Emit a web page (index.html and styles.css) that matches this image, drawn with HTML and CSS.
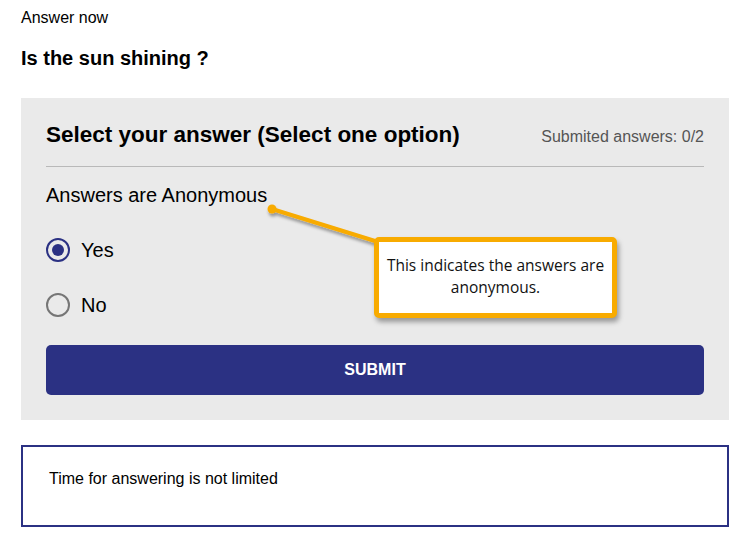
FILE: index.html
```html
<!DOCTYPE html>
<html lang="en">
<head>
<meta charset="utf-8">
<title>Answer now</title>
<link rel="stylesheet" href="styles.css">
</head>
<body>
<div class="page">
  <div class="eyebrow">Answer now</div>
  <h1 class="question">Is the sun shining ?</h1>

  <section class="panel">
    <div class="panel-head">
      <h2 class="panel-title">Select your answer (Select one option)</h2>
      <span class="counter">Submited answers: 0/2</span>
    </div>
    <div class="anon">Answers are Anonymous</div>
    <div class="options">
      <label class="option"><span class="radio checked"></span><span>Yes</span></label>
      <label class="option"><span class="radio"></span><span>No</span></label>
    </div>
    <button class="submit" type="button">SUBMIT</button>

    <svg class="connector" width="120" height="50" viewBox="0 0 120 50">
      <defs>
        <filter id="sh" x="-20%" y="-50%" width="140%" height="200%">
          <feDropShadow dx="1" dy="3" stdDeviation="1.5" flood-color="#000" flood-opacity="0.35"/>
        </filter>
      </defs>
      <g filter="url(#sh)">
        <line x1="7" y1="8" x2="110" y2="40" stroke="#f8ab00" stroke-width="4"/>
        <circle cx="7" cy="8" r="4.5" fill="#f8ab00"/>
      </g>
    </svg>
    <div class="callout">This indicates the answers are anonymous.</div>
  </section>

  <div class="info">Time for answering is not limited</div>
</div>
</body>
</html>
```

FILE: styles.css
```css
html, body {
  margin: 0;
  padding: 0;
  background: #ffffff;
}

.page {
  padding: 9px 15px 0 21px;
  font-family: "Liberation Sans", Arial, sans-serif;
  color: #000;
}

.eyebrow {
  font-size: 16px;
  line-height: 18px;
}

.question {
  margin: 20px 0 0;
  font-size: 20px;
  line-height: 23px;
  font-weight: bold;
}

.panel {
  position: relative;
  margin-top: 28px;
  background: #eaeaea;
  padding: 23px 25px 25px 25px;
}

.panel-head {
  display: flex;
  justify-content: space-between;
  align-items: baseline;
  padding-bottom: 17px;
  border-bottom: 1px solid #b9b9b9;
}

.panel-title {
  margin: 0;
  font-size: 22.5px;
  line-height: 28px;
  font-weight: bold;
}

.counter {
  font-size: 16px;
  color: #555555;
}

.anon {
  margin-top: 17px;
  font-size: 20px;
  line-height: 23px;
}

.options {
  display: flex;
  flex-direction: column;
  gap: 31px;
  margin-top: 31px;
}

.option {
  display: flex;
  align-items: center;
  gap: 11px;
  font-size: 20px;
  line-height: 24px;
  height: 24px;
}

.radio {
  box-sizing: border-box;
  width: 24px;
  height: 24px;
  border-radius: 50%;
  border: 2px solid #767676;
  display: flex;
  align-items: center;
  justify-content: center;
}

.radio.checked {
  border-color: #2b3183;
}

.radio.checked::after {
  content: "";
  width: 12px;
  height: 12px;
  border-radius: 50%;
  background: #2b3183;
}

.submit {
  display: block;
  width: 100%;
  height: 50px;
  margin-top: 28px;
  border: none;
  border-radius: 5px;
  background: #2b3183;
  color: #ffffff;
  font-family: "Liberation Sans", Arial, sans-serif;
  font-size: 16px;
  font-weight: bold;
}

.connector {
  position: absolute;
  left: 244px;
  top: 103px;
}

.callout {
  position: absolute;
  left: 353px;
  top: 139px;
  width: 243px;
  height: 81px;
  box-sizing: border-box;
  border: 5px solid #f8ab00;
  border-radius: 5px;
  background: #ffffff;
  box-shadow: 2px 4px 5px rgba(0, 0, 0, 0.35);
  display: flex;
  align-items: center;
  justify-content: center;
  text-align: center;
  padding: 0 4px 4px;
  font-family: "Open Sans", "Noto Sans", sans-serif;
  font-size: 15.5px;
  line-height: 22px;
  color: #111;
}

.info {
  margin-top: 25px;
  height: 82px;
  box-sizing: border-box;
  border: 2px solid #2b3183;
  padding: 23px 26px 22px;
  font-size: 16px;
  line-height: 18px;
}
```
